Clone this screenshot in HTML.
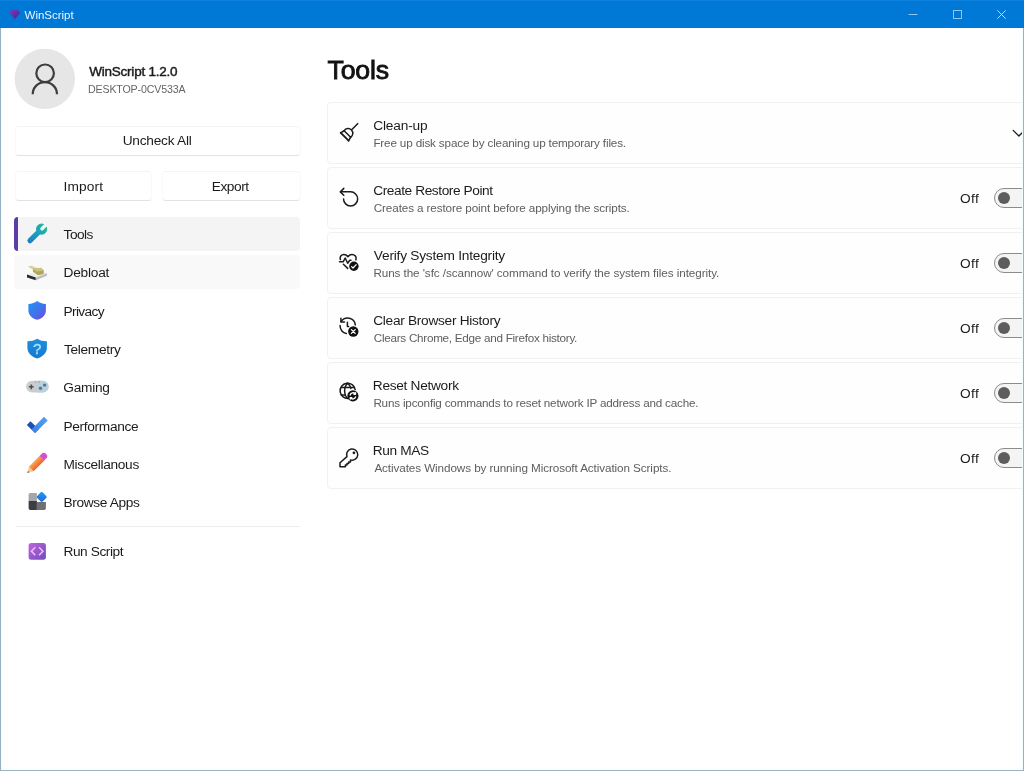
<!DOCTYPE html>
<html lang="en">
<head>
<meta charset="utf-8">
<title>WinScript</title>
<style>
*{box-sizing:border-box;margin:0;padding:0}
html,body{width:1024px;height:771px;overflow:hidden;background:#fff}
body{font-family:"Liberation Sans",Arial,sans-serif;color:#1b1b1b;position:relative}
#win{position:absolute;left:0;top:0;width:1024px;height:771px;overflow:hidden;background:#fff;will-change:transform}
.abs{position:absolute}
.t{position:absolute;white-space:nowrap;line-height:1}
/* title bar */
#titlebar{position:absolute;left:0;top:0;width:1024px;height:28px;background:#0078d6;box-shadow:inset 0 1px 0 #0d80df}
#titlebar .t{color:#e9f5fe;font-size:12px}
/* window frame */
#frameL{position:absolute;left:0;top:28px;width:1px;height:743px;background:#98b4c2;box-shadow:1px 0 0 #f0fbfd}
#frameR{position:absolute;left:1023px;top:28px;width:1px;height:743px;background:#98b4c2;box-shadow:-1px 0 0 #f0fbfd}
#frameB{position:absolute;left:0;top:770px;width:1024px;height:1px;background:#98b4c2}
/* sidebar */
.btn{position:absolute;height:30px;background:#fff;border:1px solid #f8f8f8;border-top-color:#f4f4f4;border-bottom-color:#e2e2e2;border-radius:4px}
.nav{position:absolute;left:14px;width:286px;height:34px;border-radius:4px}
.nav.sel{background:#f4f4f4;border-left:4px solid #5a3ea6}
.nav.hov{background:#f9f9f9}
.navt{font-size:14px;color:#1b1b1b}
.sep{position:absolute;left:16px;top:526px;width:284px;height:1px;background:#ececec}
/* main */
.card{position:absolute;left:327px;width:720px;height:62px;background:#fefefe;border:1px solid #f1f1f1;border-radius:4px}
.ct{font-size:14px;color:#1b1b1b}
.cd{font-size:12px;color:#5e5e5e}
.off{font-size:14px;color:#1b1b1b}
.tog{position:absolute;left:994px;width:40px;height:20px;border:1px solid #8c8c8c;border-radius:10px;background:#f4f4f4}
.knob{position:absolute;left:998px;width:12px;height:12px;border-radius:50%;background:#5d5d5d}
</style>
</head>
<body>
<div id="win">

<!-- ======= title bar ======= -->
<div id="titlebar">
  <span class="t" id="tb-title" style="left:24.62px;top:10px;font-size:11.5px;letter-spacing:-0.027px">WinScript</span>
</div>

<!-- ======= sidebar ======= -->
<span class="t" id="app-name" style="left:89.24px;top:65px;font-size:13.5px;font-weight:400;-webkit-text-stroke:0.45px #1b1b1b;letter-spacing:-0.228px">WinScript 1.2.0</span>
<span class="t" id="host" style="left:88.38px;top:84px;font-size:11.8px;color:#666;letter-spacing:-0.159px;transform:scaleX(0.9);transform-origin:0 50%">DESKTOP-0CV533A</span>

<div class="btn" style="left:15px;top:126px;width:286px"></div>
<span class="t navt" id="b-unc" style="left:122.70px;top:134px;font-size:13.7px;letter-spacing:-0.240px">Uncheck All</span>
<div class="btn" style="left:15px;top:171px;width:137px"></div>
<span class="t navt" id="b-imp" style="left:63.48px;top:180px;font-size:13.7px;letter-spacing:0.160px">Import</span>
<div class="btn" style="left:162px;top:171px;width:139px"></div>
<span class="t navt" id="b-exp" style="left:211.70px;top:180px;font-size:13.7px;letter-spacing:-0.440px">Export</span>

<div class="nav sel" style="top:217px"></div>
<div class="nav hov" style="top:255px"></div>
<span class="t navt" id="n-tools" style="left:63.62px;top:228px;font-size:13.7px;letter-spacing:-0.550px">Tools</span>
<span class="t navt" id="n-debloat" style="left:63.54px;top:266px;font-size:13.7px;letter-spacing:-0.233px">Debloat</span>
<span class="t navt" id="n-privacy" style="left:63.54px;top:305px;font-size:13.7px;letter-spacing:-0.634px">Privacy</span>
<span class="t navt" id="n-telemetry" style="left:64.00px;top:343px;font-size:13.7px;letter-spacing:-0.325px">Telemetry</span>
<span class="t navt" id="n-gaming" style="left:63.24px;top:381px;font-size:13.7px;letter-spacing:-0.240px">Gaming</span>
<span class="t navt" id="n-perf" style="left:63.48px;top:420px;font-size:13.7px;letter-spacing:-0.320px">Performance</span>
<span class="t navt" id="n-misc" style="left:63.54px;top:458px;font-size:13.7px;letter-spacing:-0.309px">Miscellanous</span>
<span class="t navt" id="n-apps" style="left:63.48px;top:496px;font-size:13.7px;letter-spacing:-0.340px">Browse Apps</span>
<div class="sep"></div>
<span class="t navt" id="n-run" style="left:63.48px;top:545px;font-size:13.7px;letter-spacing:-0.423px">Run Script</span>

<!-- ======= main ======= -->
<span class="t" id="h-tools" style="left:327.46px;top:57px;font-size:26.7px;font-weight:400;-webkit-text-stroke:0.85px #111;color:#111;letter-spacing:-0.150px">Tools</span>

<div class="card" style="top:102px"></div>
<div class="card" style="top:167px"></div>
<div class="card" style="top:232px"></div>
<div class="card" style="top:297px"></div>
<div class="card" style="top:362px"></div>
<div class="card" style="top:427px"></div>

<span class="t ct" id="c1t" style="left:373.24px;top:119px;font-size:13.7px;letter-spacing:-0.172px">Clean-up</span>
<span class="t cd" id="c1d" style="left:373.38px;top:137px;font-size:11.7px;letter-spacing:-0.159px">Free up disk space by cleaning up temporary files.</span>
<span class="t ct" id="c2t" style="left:373.24px;top:184px;font-size:13.7px;letter-spacing:-0.421px">Create Restore Point</span>
<span class="t cd" id="c2d" style="left:373.78px;top:202px;font-size:11.7px;letter-spacing:-0.114px">Creates a restore point before applying the scripts.</span>
<span class="t ct" id="c3t" style="left:373.84px;top:249px;font-size:13.7px;letter-spacing:-0.218px">Verify System Integrity</span>
<span class="t cd" id="c3d" style="left:373.38px;top:267px;font-size:11.7px;letter-spacing:-0.076px">Runs the 'sfc /scannow' command to verify the system files integrity.</span>
<span class="t ct" id="c4t" style="left:373.24px;top:314px;font-size:13.7px;letter-spacing:-0.290px">Clear Browser History</span>
<span class="t cd" id="c4d" style="left:373.78px;top:332px;font-size:11.7px;letter-spacing:-0.271px">Clears Chrome, Edge and Firefox history.</span>
<span class="t ct" id="c5t" style="left:372.84px;top:379px;font-size:13.7px;letter-spacing:-0.299px">Reset Network</span>
<span class="t cd" id="c5d" style="left:373.38px;top:397px;font-size:11.7px;letter-spacing:-0.196px">Runs ipconfig commands to reset network IP address and cache.</span>
<span class="t ct" id="c6t" style="left:372.84px;top:444px;font-size:13.7px;letter-spacing:-0.399px">Run MAS</span>
<span class="t cd" id="c6d" style="left:374.38px;top:462px;font-size:11.7px;letter-spacing:-0.087px">Activates Windows by running Microsoft Activation Scripts.</span>

<span class="t off" id="off2" style="left:959.92px;top:192px;font-size:13.7px;letter-spacing:0.500px">Off</span>
<span class="t off" id="off3" style="left:959.92px;top:257px;font-size:13.7px;letter-spacing:0.500px">Off</span>
<span class="t off" id="off4" style="left:959.92px;top:322px;font-size:13.7px;letter-spacing:0.500px">Off</span>
<span class="t off" id="off5" style="left:959.92px;top:387px;font-size:13.7px;letter-spacing:0.500px">Off</span>
<span class="t off" id="off6" style="left:959.92px;top:452px;font-size:13.7px;letter-spacing:0.500px">Off</span>

<div class="tog" style="top:188px"></div><div class="knob" style="top:192px"></div>
<div class="tog" style="top:253px"></div><div class="knob" style="top:257px"></div>
<div class="tog" style="top:318px"></div><div class="knob" style="top:322px"></div>
<div class="tog" style="top:383px"></div><div class="knob" style="top:387px"></div>
<div class="tog" style="top:448px"></div><div class="knob" style="top:452px"></div>


<!-- ======= icons (page coordinates) ======= -->
<svg id="icons" class="abs" style="left:0;top:0" width="1024" height="771" viewBox="0 0 1024 771">
<defs>
  <linearGradient id="gGem" x1="0" y1="0" x2="1" y2="1"><stop offset="0" stop-color="#8a36b4"/><stop offset=".55" stop-color="#5a2fa6"/><stop offset="1" stop-color="#27379c"/></linearGradient>
  <linearGradient id="gWr" gradientUnits="userSpaceOnUse" x1="-19" y1="0" x2="6" y2="0"><stop offset="0" stop-color="#1b7dc6"/><stop offset=".5" stop-color="#1a9fbc"/><stop offset="1" stop-color="#22ba9e"/></linearGradient>
  <linearGradient id="gSh" x1="0" y1="0" x2="1" y2="1"><stop offset="0" stop-color="#2592f2"/><stop offset=".5" stop-color="#3b76ee"/><stop offset="1" stop-color="#7a45dd"/></linearGradient>
  <linearGradient id="gTel" x1="0" y1="0" x2="0" y2="1"><stop offset="0" stop-color="#1e90da"/><stop offset="1" stop-color="#1877d2"/></linearGradient>
  <linearGradient id="gChk" x1="0" y1="1" x2="1" y2="0"><stop offset="0" stop-color="#3a7fe6"/><stop offset="1" stop-color="#56a0f6"/></linearGradient>
  <linearGradient id="gPen" x1="0" y1="0" x2="0" y2="1"><stop offset="0" stop-color="#fbaa55"/><stop offset="1" stop-color="#ec5f2b"/></linearGradient>
  <linearGradient id="gDia" x1="0" y1="0" x2="1" y2="1"><stop offset="0" stop-color="#18a0f6"/><stop offset="1" stop-color="#2a63da"/></linearGradient>
  <linearGradient id="gRun" x1="0" y1="0" x2="1" y2="1"><stop offset="0" stop-color="#c066dc"/><stop offset="1" stop-color="#6e4cbc"/></linearGradient>
  <mask id="mWr"><rect x="-30" y="-12" width="50" height="24" fill="#fff"/><path d="M0.6,-1.75 H8 V1.75 H0.6 A1.75,1.75 0 0 1 0.6,-1.75Z" fill="#000"/></mask>
</defs>

<!-- title-bar gem -->
<path d="M11.2,9.9 H17.6 L20.3,12.8 L15,19.2 L9.6,12.9 Z" fill="url(#gGem)"/>
<!-- window buttons -->
<g stroke="#e6f2fb" stroke-width="1" fill="none">
  <path d="M908.5,14.5 H917.5" stroke="#8dc6f0"/>
  <rect x="953.5" y="10.5" width="8" height="8" stroke="#8dc6f0"/>
  <path d="M997.3,10.3 L1005.7,18.7 M1005.7,10.3 L997.3,18.7" stroke="#b8dcf6"/>
</g>

<!-- avatar -->
<circle cx="44.8" cy="78.85" r="30.2" fill="#e6e6e6"/>
<!-- avatar person -->
<g stroke="#3d3d3d" stroke-width="2.2" fill="none">
  <circle cx="45.1" cy="73.3" r="8.8"/>
  <path d="M32.7,94.2 A12.15,12.15 0 0 1 57,94.2"/>
</g>

<!-- nav: Tools (wrench) -->
<g transform="translate(41.6,229.1) rotate(-45)" mask="url(#mWr)">
  <circle cx="0" cy="0" r="5.6" fill="url(#gWr)"/>
  <rect x="-19" y="-2.6" width="17" height="5.2" rx="2.6" fill="url(#gWr)"/>
</g>

<!-- nav: Debloat (disk clean-up) -->
<g>
  <path d="M27,274.4 L38.4,270.8 L47,273.2 L35.8,277.4 Z" fill="#ededee"/>
  <path d="M27,274.4 L35.8,277.4 L35.8,280.3 L27,277.4 Z" fill="#2a2b2c"/>
  <path d="M35.8,277.4 L47,273.2 L47,275.8 L35.8,280.3 Z" fill="#bcbfc1"/>
  <path d="M27.8,266.5 L31.4,265.7 L37.2,268.3 L33.6,270.1 Z" fill="#d8d294"/>
  <path d="M33.2,268.9 L40.6,267.7 L43.9,270.6 L43.6,274.1 L38,275.2 L32.8,271.6 Z" fill="#b3a654"/>
  <path d="M33.2,268.9 L40.6,267.7 L43.9,270.6 L36.6,271.6 Z" fill="#cdc57c"/>
</g>

<!-- nav: Privacy shield -->
<path d="M37.2,301 C39.4,302.8 42.4,303.8 45.9,303.9 L45.9,310.2 C45.9,315 42.6,318.3 37.2,319.8 C31.8,318.3 28.4,315 28.4,310.2 L28.4,303.9 C31.9,303.8 34.9,302.8 37.2,301 Z" fill="url(#gSh)"/>

<!-- nav: Telemetry shield -->
<path d="M37.15,338.8 C39.8,340.5 43,341.3 46.9,341.3 L46.9,347.5 C46.9,352.8 43.2,356.6 37.15,358.6 C31.1,356.6 27.4,352.8 27.4,347.5 L27.4,341.3 C31.3,341.3 34.5,340.5 37.15,338.8 Z" fill="url(#gTel)"/>
<text x="37.2" y="354.3" text-anchor="middle" font-family="Liberation Sans, Arial, sans-serif" font-size="15" fill="#a4e4fb" stroke="#a4e4fb" stroke-width="0.35">?</text>

<!-- nav: Gaming -->
<g>
  <rect x="26.1" y="380.8" width="22.5" height="11.8" rx="5.9" fill="#c9cdd0"/>
  <path d="M37.3,380.8 H42.7 A5.9,5.9 0 0 1 42.7,392.6 H37.3 Z" fill="#b9d0df"/>
  <path d="M31.3,384.4 V389.2 M28.9,386.8 H33.7" stroke="#4a5257" stroke-width="1.6" fill="none"/>
  <circle cx="44.6" cy="385.1" r="1.7" fill="#55798f"/>
  <circle cx="40.5" cy="388.2" r="1.7" fill="#55798f"/>
  <rect x="34.8" y="381.6" width="1.4" height="1" fill="#8a9196"/>
  <rect x="38.3" y="381.6" width="1.4" height="1" fill="#8a9196"/>
</g>

<!-- nav: Performance check -->
<path d="M26.8,425 L30.5,421.2 L38.8,429.3 L35.1,432.9 Z" fill="#1f4fb6"/>
<path d="M31.5,429.4 L44,416.7 L47.7,420.4 L35.1,432.9 Z" fill="url(#gChk)"/>

<!-- nav: Miscellanous pencil -->
<g transform="translate(27.4,472.9) rotate(-45.4)">
  <path d="M0,0 L5.4,-3.3 L5.4,3.3 Z" fill="#f4cb8f"/>
  <path d="M0,0 L1.8,-1.1 L1.8,1.1 Z" fill="#7a6652"/>
  <rect x="5.4" y="-3.3" width="15.4" height="6.6" fill="url(#gPen)"/>
  <path d="M20.6,-3.3 H23.4 A3.3,3.3 0 0 1 23.4,3.3 H20.6 Z" fill="#d850c6"/>
</g>

<!-- nav: Browse Apps -->
<g>
  <path d="M30.2,493 H36.9 V501 H28.6 V494.6 A1.6,1.6 0 0 1 30.2,493 Z" fill="#a3a7ab"/>
  <path d="M28.6,501 H36.9 V510.1 H30.4 A1.8,1.8 0 0 1 28.6,508.3 Z" fill="#3b3f42"/>
  <path d="M36.9,502 H45.9 V508.3 A1.8,1.8 0 0 1 44.1,510.1 H36.9 Z" fill="#6d7174"/>
  <rect x="-3.9" y="-3.9" width="7.8" height="7.8" rx="1.4" transform="translate(41.7,496.9) rotate(45)" fill="url(#gDia)"/>
</g>

<!-- nav: Run Script -->
<rect x="28.6" y="542.9" width="17.3" height="16.8" rx="2.6" fill="url(#gRun)"/>
<path d="M35.3,547.2 L31.4,551.2 L35.3,555.2 M39,547.2 L42.9,551.2 L39,555.2" stroke="#f3b9ff" stroke-width="1.6" fill="none"/>

<!-- ===== card icons ===== -->
<g stroke="#1b1b1b" stroke-width="1.5" fill="none" stroke-linecap="round" stroke-linejoin="round">
  <!-- Clean-up: broom -->
  <g transform="translate(347.4,134) rotate(-45)">
    <path d="M5.7,0 H15.2" stroke-linecap="butt"/>
    <path d="M0,-4.59 A4.7,4.7 0 1 1 0,4.59 Z"/>
    <path d="M0,-4.59 L-4.1,-5.6 M0,4.59 L-4.1,5.6"/>
    <path d="M-3.8,-5.5 V5.5" stroke-width="1.9"/>
  </g>
  <!-- Create Restore Point: arrow counter-clockwise -->
  <path d="M343.8,188.4 L340.3,191.85 L343.8,195.3"/>
  <path d="M340.6,191.85 H350.6 A7.05,7.05 0 1 1 343.55,198.9"/>
  <!-- Verify: heart pulse -->
  <path d="M340.4,259.6 C339.4,256.6 341.4,254.5 343.9,254.5 C345.5,254.5 346.9,255.3 347.9,256.7 C348.9,255.3 350.3,254.5 351.9,254.5 C354.8,254.5 356.8,256.8 355.9,259.8"/>
  <path d="M339.5,261.7 H343.3 L345.2,258 L347.7,263.2 L349.8,260.3 H351"/>
  <path d="M343.4,264.2 L347.7,268.4"/>
  <!-- Clear history -->
  <path d="M340.9,318.3 V322 H344.5"/>
  <path d="M341.2,321.6 A7.7,7.7 0 0 1 355.3,324.9"/>
  <path d="M340.1,325.6 A7.7,7.7 0 0 0 346.3,333.6"/>
  <path d="M347.4,322.3 V326.5 H348.6"/>
  <!-- Reset network: globe -->
  <path d="M348.6,398.4 A7.6,7.6 0 1 1 355.2,389.6"/>
  <path d="M341.2,387.4 H354.4"/>
  <path d="M341.4,394.9 H345.3"/>
  <path d="M347.7,383.3 C345.6,385 344.6,387.6 344.6,390.9 C344.6,393.9 345.4,396.2 346.8,397.8"/>
  <path d="M347.7,383.3 C349.5,384.7 350.5,386.3 350.9,388.4"/>
  <!-- Run MAS: key -->
  <path d="M346.95,456.6 A5.6,5.6 0 1 1 350.5,459.9 V461.9 H348.7 V463.5 H347 V465 H345.4 V466.7 H340 V462.7 Z"/>
</g>
<circle cx="353.9" cy="452.8" r="1.35" fill="#1b1b1b"/>
<!-- badges -->
<circle cx="353.9" cy="266.3" r="4.7" fill="#111"/>
<path d="M351.6,266.6 L353,268 L356.2,264.7" stroke="#fff" stroke-width="1.2" fill="none" stroke-linecap="round" stroke-linejoin="round"/>
<circle cx="353.3" cy="331.5" r="5.2" fill="#111"/>
<path d="M351.4,329.6 L355.2,333.4 M355.2,329.6 L351.4,333.4" stroke="#fff" stroke-width="1.3" fill="none" stroke-linecap="round"/>
<circle cx="352.9" cy="395.9" r="5.6" fill="#111"/>
<g stroke="#fff" stroke-width="1.45" fill="none" stroke-linecap="round" stroke-linejoin="round">
  <path d="M350.2,394.9 A2.9,2.9 0 0 1 355.2,393.9 M355.5,392.7 V394.2 H354"/>
  <path d="M355.6,396.9 A2.9,2.9 0 0 1 350.6,397.9 M350.3,399.1 V397.6 H351.8"/>
</g>
<!-- chevron -->
<path d="M1013.2,130.4 L1018.9,136 L1024.6,130.4" stroke="#1b1b1b" stroke-width="1.3" fill="none" stroke-linecap="round" stroke-linejoin="round"/>
</svg>

<!-- ======= window frame ======= -->
<div id="frameL"></div><div id="frameR"></div><div id="frameB"></div>
</div>
</body>
</html>
